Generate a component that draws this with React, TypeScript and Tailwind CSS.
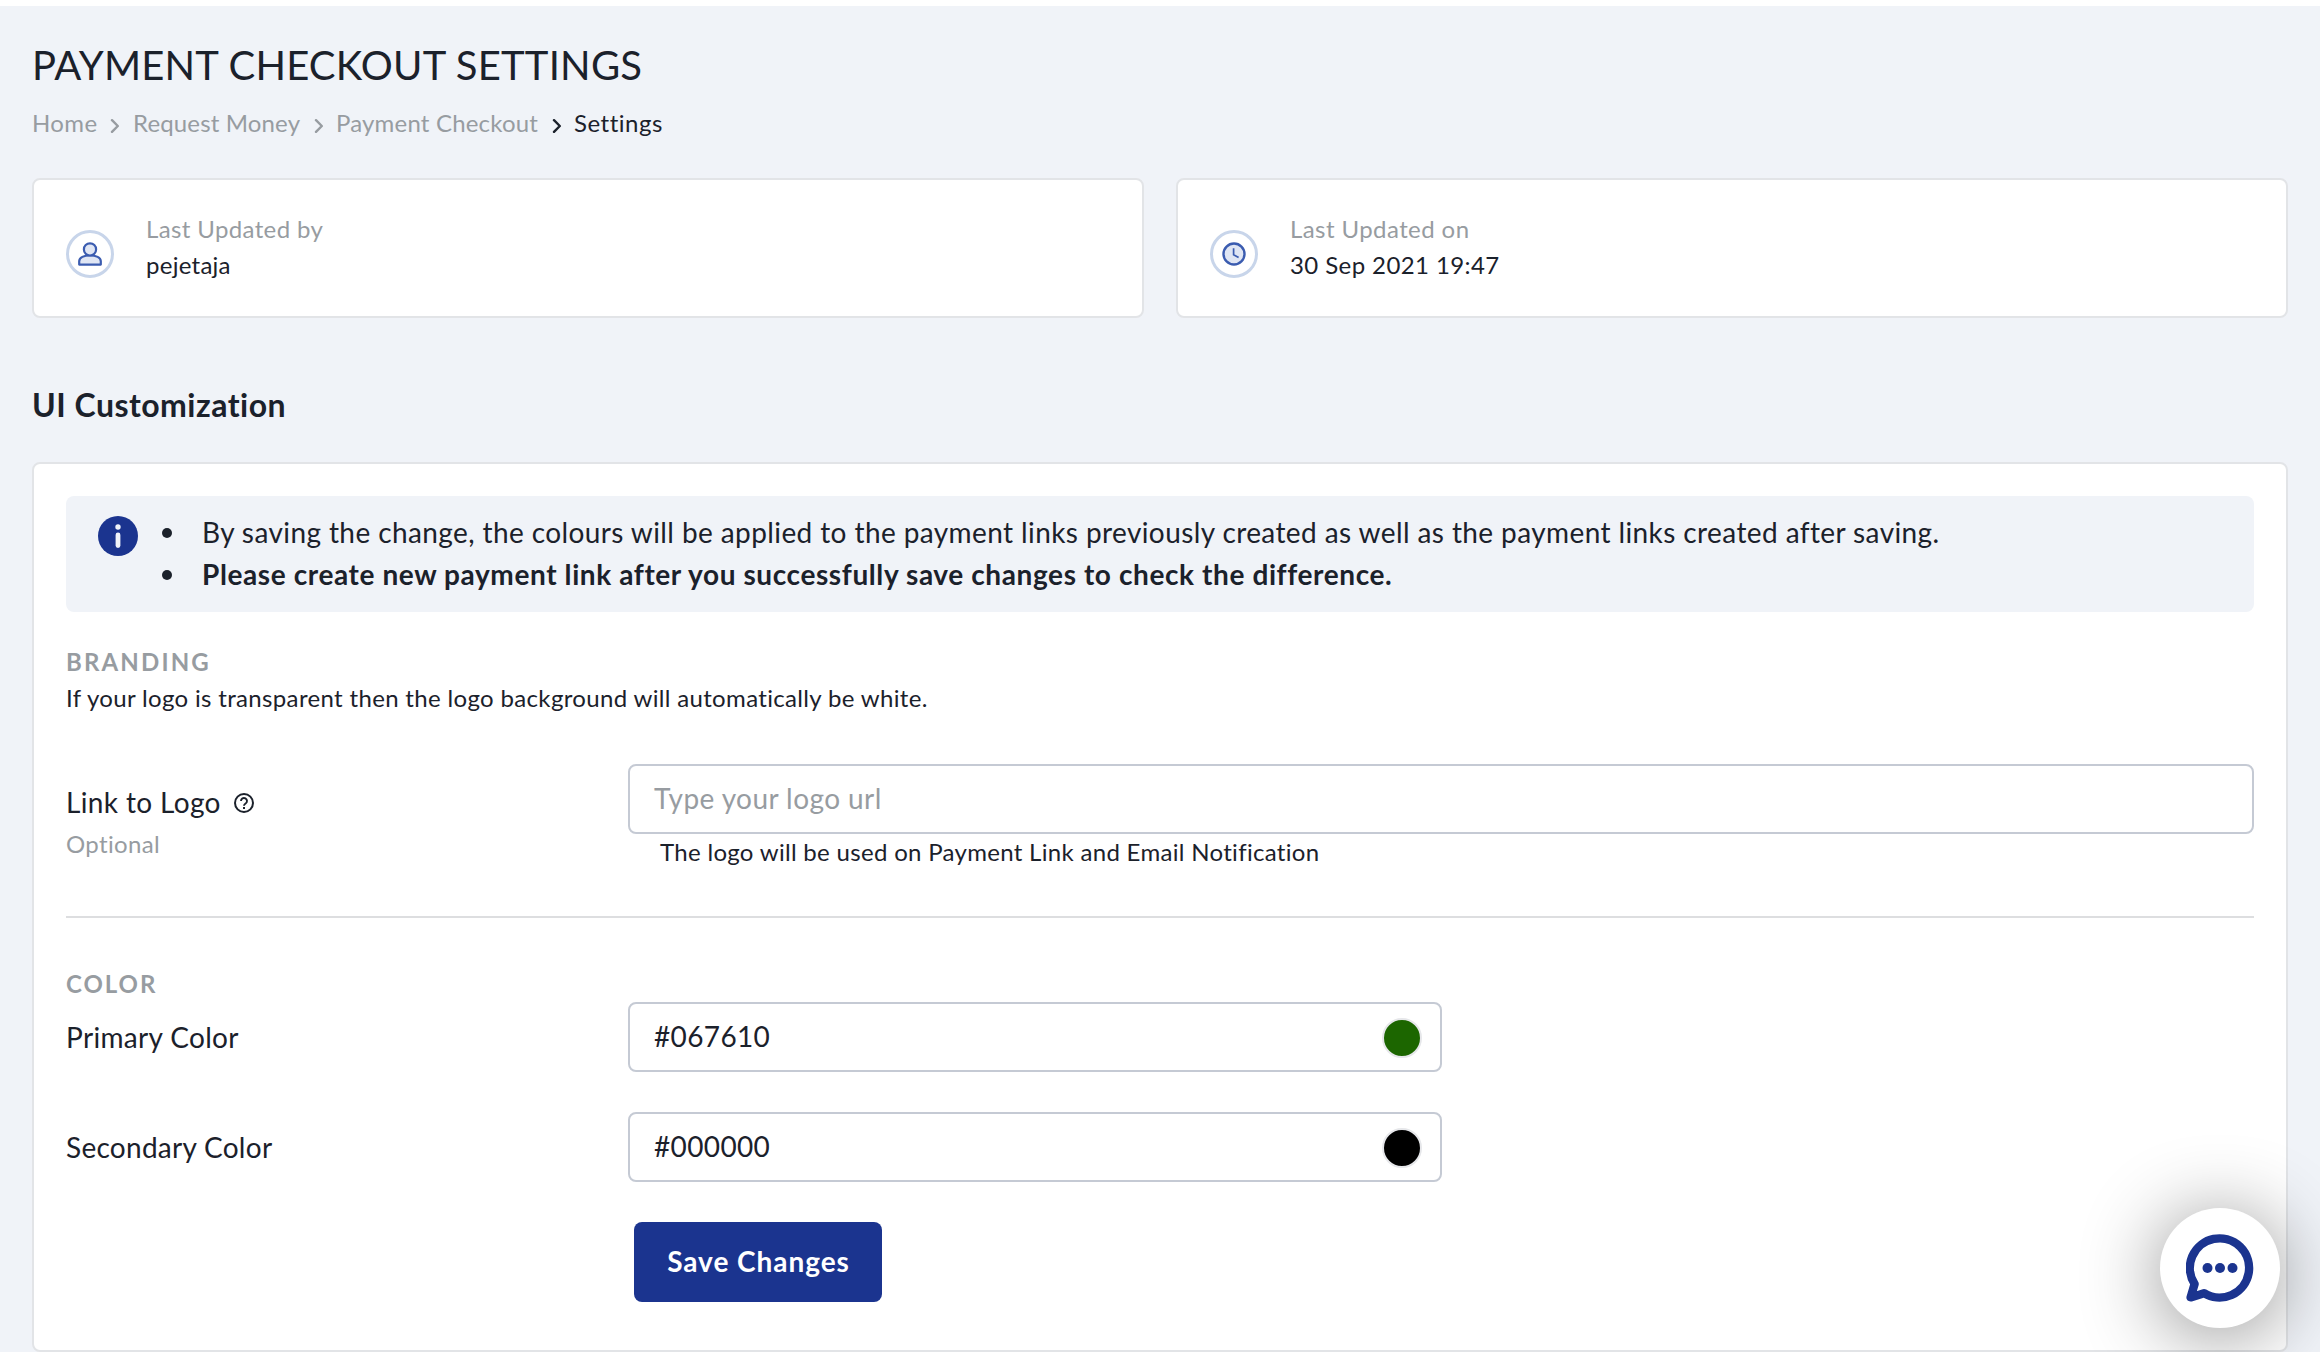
import type { ReactNode } from "react";

function Chevron({ className }: { className: string }) {
  return (
    <svg viewBox="0 0 10 14" className={`h-[14px] w-[10px] shrink-0 ${className}`} fill="none" stroke="currentColor" strokeWidth="2.4" strokeLinecap="round" strokeLinejoin="round">
      <path d="M2 1.2 7.8 7 2 12.8" />
    </svg>
  );
}

function UserIcon() {
  return (
    <svg viewBox="0 0 48 48" className="mt-[18px] size-12 shrink-0" fill="none">
      <circle cx="24" cy="24" r="22.5" stroke="#c8d5ea" strokeWidth="3" />
      <g fill="#e0e6f4" stroke="#3b5cb0" strokeWidth="2.2" strokeLinejoin="round">
        <path d="M13.2 34.6v-3.3c0-3.8 4.8-6 10.8-6s10.8 2.2 10.8 6v3.3z" />
        <circle cx="24" cy="19.4" r="6.1" />
      </g>
    </svg>
  );
}

function ClockIcon() {
  return (
    <svg viewBox="0 0 48 48" className="mt-[18px] size-12 shrink-0" fill="none">
      <circle cx="24" cy="24" r="22.5" stroke="#c8d5ea" strokeWidth="3" />
      <circle cx="24" cy="24" r="10.5" fill="#e0e6f4" stroke="#3b5cb0" strokeWidth="2.4" />
      <path d="M23.6 18.2v6.6l5 2.8" stroke="#3b5cb0" strokeWidth="1.7" />
    </svg>
  );
}

function InfoIcon() {
  return (
    <svg viewBox="0 0 40 40" className="mt-5 size-10 shrink-0">
      <circle cx="20" cy="20" r="20" fill="#1b348f" />
      <circle cx="20" cy="11" r="2.7" fill="#f0f3f9" />
      <rect x="17.6" y="16.6" width="4.8" height="15.4" rx="2.4" fill="#f0f3f9" />
    </svg>
  );
}

function HelpIcon() {
  return (
    <svg viewBox="0 0 20 20" className="size-5 shrink-0" fill="none" stroke="#1b212b" strokeWidth="2">
      <circle cx="10" cy="10" r="9" />
      <path d="M7 8a3 3 0 1 1 4.6 2.5C10.6 11.2 10 11.6 10 12.8" strokeWidth="1.9" />
      <path d="M10 14v2" />
    </svg>
  );
}

function ChatIcon() {
  return (
    <svg viewBox="0 0 68 68" className="size-[68px]" fill="none">
      <path d="M4.6 63.4 8.6 50A29.6 29.6 0 1 1 18 59.2Z" stroke="#1b348f" strokeWidth="8.4" strokeLinejoin="round" />
      <circle cx="21.5" cy="34" r="5" fill="#1b348f" />
      <circle cx="34" cy="34" r="5" fill="#1b348f" />
      <circle cx="46.5" cy="34" r="5" fill="#1b348f" />
    </svg>
  );
}

function InfoCard({ icon, children }: { icon: ReactNode; children: ReactNode }) {
  return (
    <div className="flex h-[140px] flex-1 gap-8 rounded-lg border-2 border-[#e2e4e7] bg-white px-8 pt-8">
      {icon}
      <div className="text-2xl leading-[34px]">{children}</div>
    </div>
  );
}

function ColorField({ label, labelClass, value, swatch }: { label: string; labelClass: string; value: string; swatch: string }) {
  return (
    <div className="flex h-[70px] items-center">
      <div className={`w-[562px] pb-px text-[28px] leading-[38px] ${labelClass}`}>{label}</div>
      <div className="flex h-[70px] w-[814px] items-center justify-between rounded-lg border-2 border-[#c5cad4] bg-white pr-[18px] pl-6">
        <span className="pb-[2px] text-[28px] leading-[38px] tracking-[0.36px]">{value}</span>
        <span className={`mt-[2px] size-10 rounded-full border-2 border-[#e6e7ea] ${swatch}`} />
      </div>
    </div>
  );
}

export default function App() {
  return (
    <div className="relative h-[1352px] w-[2320px] overflow-hidden border-t-[6px] border-white bg-[#f0f3f8] px-8 font-['Lato',sans-serif] text-[#1b212b]">
      <h1 className="mt-8 h-[54px] text-[40px] leading-[54px] tracking-[0.22px]">PAYMENT CHECKOUT SETTINGS</h1>

      <nav className="mt-[13px] flex h-9 items-center text-2xl leading-9 text-[#979ca1]">
        <span className="w-[78px] tracking-[0.4px]">Home</span>
        <Chevron className="mt-[5px]" />
        <span className="ml-[13px] w-[181px] tracking-[0.15px]">Request Money</span>
        <Chevron className="mt-[5px]" />
        <span className="ml-3 w-[216px] tracking-[0.19px]">Payment Checkout</span>
        <Chevron className="mt-[5px] text-[#1b212b]" />
        <span className="ml-3 tracking-[0.5px] text-[#1b212b]">Settings</span>
      </nav>

      <section className="mt-[37px] flex gap-8">
        <InfoCard icon={<UserIcon />}>
          <div className="pb-[2px] tracking-[0.373px] text-[#979ca1]">Last Updated by</div>
          <div className="tracking-[0.262px]">pejetaja</div>
        </InfoCard>
        <InfoCard icon={<ClockIcon />}>
          <div className="pb-[2px] tracking-[0.42px] text-[#979ca1]">Last Updated on</div>
          <div className="tracking-[0.407px]">30 Sep 2021 19:47</div>
        </InfoCard>
      </section>

      <h2 className="mt-[63px] h-12 text-[32px] leading-[48px] font-bold tracking-[0.48px]">UI Customization</h2>

      <main className="mt-[33px] h-[890px] rounded-lg border-2 border-[#e2e4e7] bg-white px-8 pt-8">
        <div className="flex h-[116px] rounded-lg bg-[#f0f3f8] pl-8">
          <InfoIcon />
          <ul className="ml-6 pt-[15px] text-[28px] leading-[42px]">
            <li className="flex gap-[30px]">
              <span className="mt-[17px] size-[10px] rounded-full bg-[#1b212b]" />
              <span className="tracking-[0.4px]">By saving the change, the colours will be applied to the payment links previously created as well as the payment links created after saving.</span>
            </li>
            <li className="flex gap-[30px] font-bold">
              <span className="mt-[17px] size-[10px] rounded-full bg-[#1b212b]" />
              <span className="tracking-[0.6px]">Please create new payment link after you successfully save changes to check the difference.</span>
            </li>
          </ul>
        </div>

        <h3 className="mt-8 h-9 text-2xl leading-[35px] font-bold tracking-[2.15px] text-[#979ca1]">BRANDING</h3>
        <p className="h-9 text-2xl leading-[35px] tracking-[0.34px]">If your logo is transparent then the logo background will automatically be white.</p>

        <div className="mt-12 flex h-[154px] border-b-2 border-[#dddee0]">
          <div className="w-[562px] shrink-0 pt-[18px]">
            <div className="flex h-[42px] items-center gap-[13px] text-[28px] leading-[38px] tracking-[0.36px]">
              <span className="pb-[2px]">Link to Logo</span>
              <HelpIcon />
            </div>
            <div className="pt-[2px] text-2xl leading-9 tracking-[0.34px] text-[#979ca1]">Optional</div>
          </div>
          <div className="flex-1">
            <div className="flex h-[70px] items-center rounded-lg border-2 border-[#c5cad4] bg-white px-6 text-[#979ca1]">
              <span className="pb-[2px] text-[28px] leading-[38px] tracking-[0.431px]">Type your logo url</span>
            </div>
            <p className="pl-8 text-2xl leading-[35px] tracking-[0.31px]">The logo will be used on Payment Link and Email Notification</p>
          </div>
        </div>

        <h3 className="mt-12 h-9 text-2xl leading-[36px] font-bold tracking-[1.95px] text-[#979ca1]">COLOR</h3>
        <div className="flex flex-col gap-10">
          <ColorField label="Primary Color" labelClass="tracking-[0.335px]" value="#067610" swatch="bg-[#1c6600]" />
          <ColorField label="Secondary Color" labelClass="tracking-[0.28px]" value="#000000" swatch="bg-black" />
        </div>
        <button className="mt-10 ml-[568px] flex h-20 w-[248px] items-center justify-center rounded-lg bg-[#1b348f] pb-[3px] pl-px text-[28px] font-bold tracking-[0.951px] text-white">Save Changes</button>
      </main>

      <button className="absolute top-[1202px] left-[2160px] flex size-[120px] items-center justify-center rounded-full bg-white shadow-[0_8px_80px_rgba(0,0,0,0.45)]">
        <ChatIcon />
      </button>
    </div>
  );
}
